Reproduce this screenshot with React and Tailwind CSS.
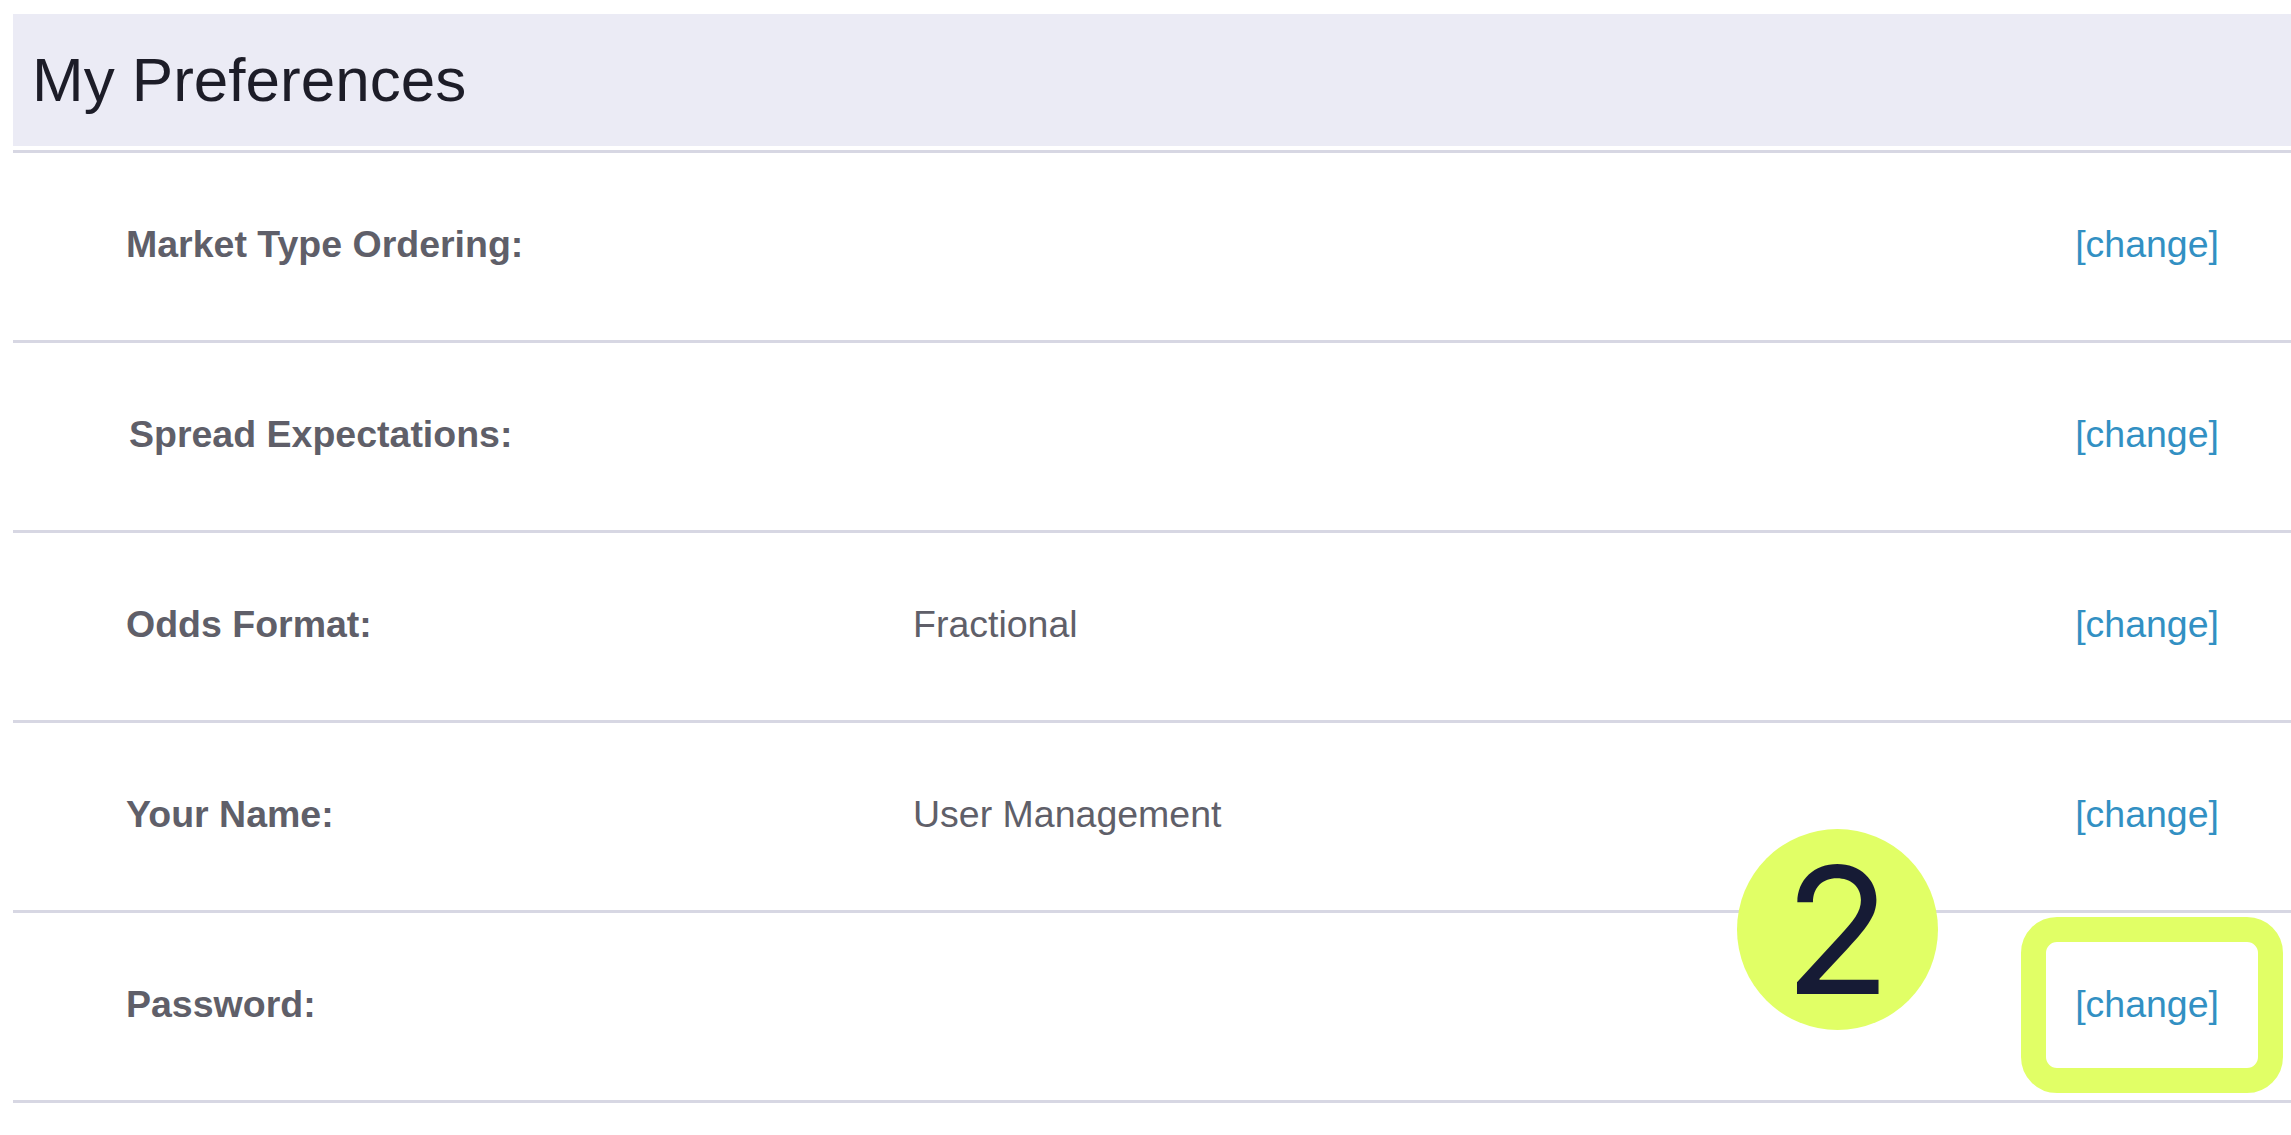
export default function App() {
  const rows = [
    { label: "Market Type Ordering:", value: "", shift: false },
    { label: "Spread Expectations:", value: "", shift: true },
    { label: "Odds Format:", value: "Fractional", shift: false },
    { label: "Your Name:", value: "User Management", shift: false },
    { label: "Password:", value: "", shift: false, highlight: true },
  ];
  return (
    <div
      className="relative min-h-screen w-full overflow-hidden bg-white pl-[13px] pt-[14px]"
      style={{ fontFamily: '"Liberation Sans", Arial, sans-serif' }}
    >
      <div className="flex h-[132px] items-center bg-[#ebebf5] pl-[19px]">
        <h1 className="text-[62px] font-normal leading-none text-[#1d1d28]">My Preferences</h1>
      </div>
      <div className="mt-[4px] border-t-[3px] border-[#d7d7e3]">
        {rows.map((r) => (
          <div
            key={r.label}
            className="relative flex h-[190px] items-center border-b-[3px] border-[#d7d7e3] pb-[4px] pl-[113px] pr-[72px] text-[37.5px] leading-none"
          >
            <div className={"w-[787px] font-bold text-[#5f5f69] " + (r.shift ? "pl-[3px]" : "")}>
              {r.label}
            </div>
            <div className="flex-1 text-[#5f5f69]">{r.value}</div>
            <a href="#" className="text-[#3290c3]">[change]</a>
            {r.highlight && (
              <div className="pointer-events-none absolute right-[8px] top-[4px] h-[176px] w-[262px] rounded-[36px] border-[25px] border-[#e1ff66]" />
            )}
          </div>
        ))}
      </div>
      <div
        className="absolute left-[1737px] top-[829px] flex h-[201px] w-[201px] items-center justify-center rounded-full bg-[#e1ff66]"
        style={{ fontFamily: 'Inter, "Noto Sans", sans-serif' }}
      >
        <span className="text-[176px] font-normal leading-none text-[#161b35]">2</span>
      </div>
    </div>
  );
}
